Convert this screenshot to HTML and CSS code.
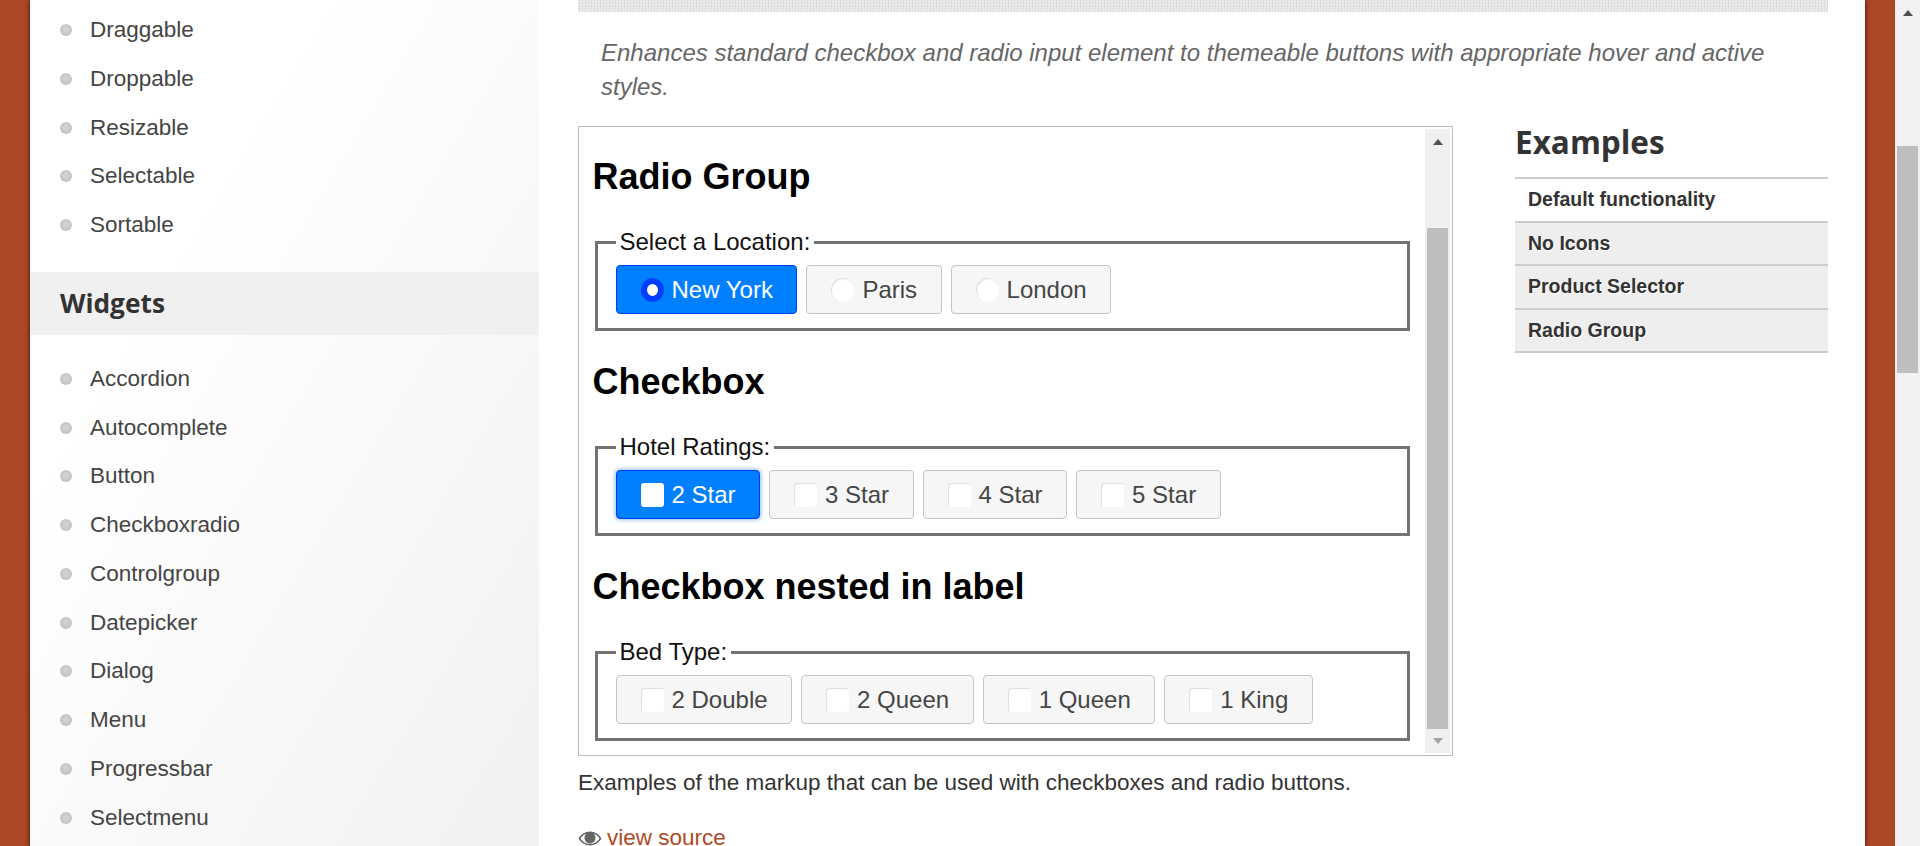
FILE: index.html
```html
<!DOCTYPE html>
<html lang="en">
<head>
<meta charset="utf-8">
<title>Checkboxradio | jQuery UI</title>
<link rel="stylesheet" href="styles.css">
</head>
<body>
<div class="page">
  <div class="gutter"></div>
  <div class="panel">
    <aside class="sidebar">
      <ul class="nav nav-first">
        <li>Draggable</li>
        <li>Droppable</li>
        <li>Resizable</li>
        <li>Selectable</li>
        <li>Sortable</li>
      </ul>
      <h3 class="nav-title">Widgets</h3>
      <ul class="nav">
        <li>Accordion</li>
        <li>Autocomplete</li>
        <li>Button</li>
        <li>Checkboxradio</li>
        <li>Controlgroup</li>
        <li>Datepicker</li>
        <li>Dialog</li>
        <li>Menu</li>
        <li>Progressbar</li>
        <li>Selectmenu</li>
      </ul>
    </aside>
    <main class="main">
      <div class="band"></div>
      <p class="intro">Enhances standard checkbox and radio input element to themeable buttons with appropriate hover and active styles.</p>
      <div class="columns">
        <div class="demo-col">
          <div class="frame">
            <div class="frame-body">
              <h2>Radio Group</h2>
              <fieldset>
                <legend>Select a Location:</legend>
                <div class="btn-row">
                  <span class="btn btn-on"><span class="radio radio-on"></span>New York</span>
                  <span class="btn"><span class="radio"></span>Paris</span>
                  <span class="btn"><span class="radio"></span>London</span>
                </div>
              </fieldset>
              <h2>Checkbox</h2>
              <fieldset>
                <legend>Hotel Ratings:</legend>
                <div class="btn-row">
                  <span class="btn btn-on btn-focus"><span class="check check-on"></span>2 Star</span>
                  <span class="btn"><span class="check"></span>3 Star</span>
                  <span class="btn"><span class="check"></span>4 Star</span>
                  <span class="btn"><span class="check"></span>5 Star</span>
                </div>
              </fieldset>
              <h2>Checkbox nested in label</h2>
              <fieldset>
                <legend>Bed Type:</legend>
                <div class="btn-row">
                  <span class="btn"><span class="check"></span>2 Double</span>
                  <span class="btn"><span class="check"></span>2 Queen</span>
                  <span class="btn"><span class="check"></span>1 Queen</span>
                  <span class="btn"><span class="check"></span>1 King</span>
                </div>
              </fieldset>
            </div>
            <div class="frame-bar">
              <span class="arrow-up"></span>
              <span class="frame-thumb"></span>
              <span class="arrow-down"></span>
            </div>
          </div>
          <p class="note">Examples of the markup that can be used with checkboxes and radio buttons.</p>
          <p class="source">
            <svg class="eye" viewBox="0 0 24 16" aria-hidden="true"><path d="M12 1C7 1 3 4 .5 8 3 12 7 15 12 15s9-3 11.500-7C21 4 17 1 12 1zm0 12.500C8 13.500 4.700 11.500 2.500 8 4 5.700 6 4 8.300 3.200 7 4.300 6.500 5.800 6.500 7.500c0 3 2.500 5.500 5.500 5.500s5.500-2.500 5.500-5.500c0-1.700-.5-3.200-1.800-4.300C18 4 20 5.700 21.500 8c-2.200 3.500-5.500 5.500-9.500 5.500z"/></svg>
            <a class="source-link">view source</a>
          </p>
        </div>
        <nav class="examples">
          <h2 class="examples-title">Examples</h2>
          <ul class="examples-list">
            <li class="current">Default functionality</li>
            <li>No Icons</li>
            <li>Product Selector</li>
            <li>Radio Group</li>
          </ul>
        </nav>
      </div>
    </main>
  </div>
  <div class="gutter-right"></div>
  <div class="page-bar">
    <span class="arrow-up"></span>
    <span class="page-thumb"></span>
  </div>
</div>
</body>
</html>
```
FILE: styles.css
```css
* { box-sizing: border-box; }
html, body { margin: 0; height: 100%; overflow: hidden; }
body { font-family: "Liberation Sans", Arial, sans-serif; color: #333; background: #fff; }

.page { display: flex; height: 846px; overflow: hidden; }
.gutter { width: 30px; flex: none; background: #ae4726; }
.gutter-right { width: 30px; flex: none; background: #ae4726; }
.panel { width: 1835px; flex: none; display: flex; background: #fff; box-shadow: 0 0 5px rgba(0, 0, 0, .75); position: relative; }

.sidebar { width: 509px; flex: none; background: linear-gradient(to bottom right, #fff 30%, #f1f1f1 100%); padding-top: 6px; }
.nav { list-style: none; margin: 0; padding: 0; }
.nav li { height: 48.75px; line-height: 48.75px; padding-left: 60px; font-size: 22.5px; color: #444; position: relative; }
.nav li::before { content: ""; position: absolute; left: 30px; top: 18px; width: 12px; height: 12px; border-radius: 50%; background: radial-gradient(circle at 50% 45%, #d6d6d6, #bababa); }
.nav-title { margin: 22px 0 20px; height: 63px; padding-left: 30px; background: #f0f0f0; font: 700 26.3px/62px "Open Sans", sans-serif; color: #333; }

.main { flex: 1; min-width: 0; padding: 0 37px 0 39px; }
.band { height: 12px; background-color: #e8e8e8; background-image: repeating-conic-gradient(#dcdcdc 0 25%, #f0f0f0 0 50%); background-size: 3px 3px; }
.intro { margin: 24px 0 22px; padding: 0 30px 0 23px; font-size: 24px; line-height: 34px; font-style: italic; color: #666; }

.columns { display: grid; grid-template-columns: 875px 313px; column-gap: 62px; }

.frame { height: 630px; border: 1px solid #bbb; padding: 2px; display: flex; background: #fff; }
.frame-body { flex: 1; min-width: 0; padding: 0 12px 0 11.500px; overflow: hidden; }
.frame-body h2 { margin: 30px 0 30px; font-size: 36px; line-height: 42px; font-weight: 700; color: #000; }
.frame-body h2:first-child { margin-top: 27px; }
fieldset { margin: 0 3px 0 2px; padding: 9px 18px 14px; border: 3px solid #737373; min-width: 0; }
legend { padding: 0 4px; font-size: 24px; line-height: 28px; color: #111; }
.btn-row { display: flex; gap: 9px; }
.btn { height: 49px; padding: 0 23.500px 0 24px; display: flex; align-items: center; background: #f6f6f6; border: 1px solid #c5c5c5; border-radius: 4px; color: #454545; font-size: 24px; white-space: nowrap; }
.btn-on { background: #007fff; border-color: #003eff; color: #fff; }
.btn-focus { box-shadow: 0 0 5px #5e9ed6; }
.radio, .check { width: 23px; height: 24px; margin-right: 8px; flex: none; background: #fff; box-shadow: inset 1px 1px 1px #ddd; }
.radio { border-radius: 50%; }
.check { border-radius: 3px; }
.check-on { box-shadow: none; }
.radio-on { background: #fff; border: 6px solid #003eff; box-shadow: none; }

.frame-bar { width: 25px; flex: none; background: #f0f0f0; display: flex; flex-direction: column; align-items: center; padding: 10px 2px 9px; }
.frame-thumb { width: 21px; flex: 1; margin: 83px 0 9px; background: #bebebe; }
.arrow-up { width: 0; height: 0; flex: none; border: 5.500px solid transparent; border-top: 0; border-bottom: 6px solid #505050; }
.arrow-down { width: 0; height: 0; flex: none; border: 5.500px solid transparent; border-bottom: 0; border-top: 6px solid #a3a3a3; }

.note { margin: 10px 0 21px; font-size: 22.5px; line-height: 34px; color: #333; }
.source { margin: 0; font-size: 22.5px; line-height: 34px; display: flex; align-items: center; gap: 5px; }
.eye { width: 24px; height: 17px; fill: #666; flex: none; }
.source-link { color: #b24926; }

.examples-title { margin: 0 0 19px; font: 700 31.5px/32px "Open Sans", sans-serif; color: #333; }
.examples-list { list-style: none; margin: 0; padding: 0; border-top: 2px solid #ccc; }
.examples-list li { height: 43.500px; line-height: 41px; padding-left: 13px; background: #eee; border-bottom: 2px solid #ccc; font-size: 19.5px; font-weight: 700; color: #333; text-shadow: 1px 1px 0 #fff; }
.examples-list .current { background: #fff; }

.page-bar { width: 25px; flex: none; background: #f1f1f1; display: flex; flex-direction: column; align-items: center; padding-top: 10px; }
.page-thumb { width: 21px; height: 227px; margin-top: 130px; background: #bebebe; }
```
